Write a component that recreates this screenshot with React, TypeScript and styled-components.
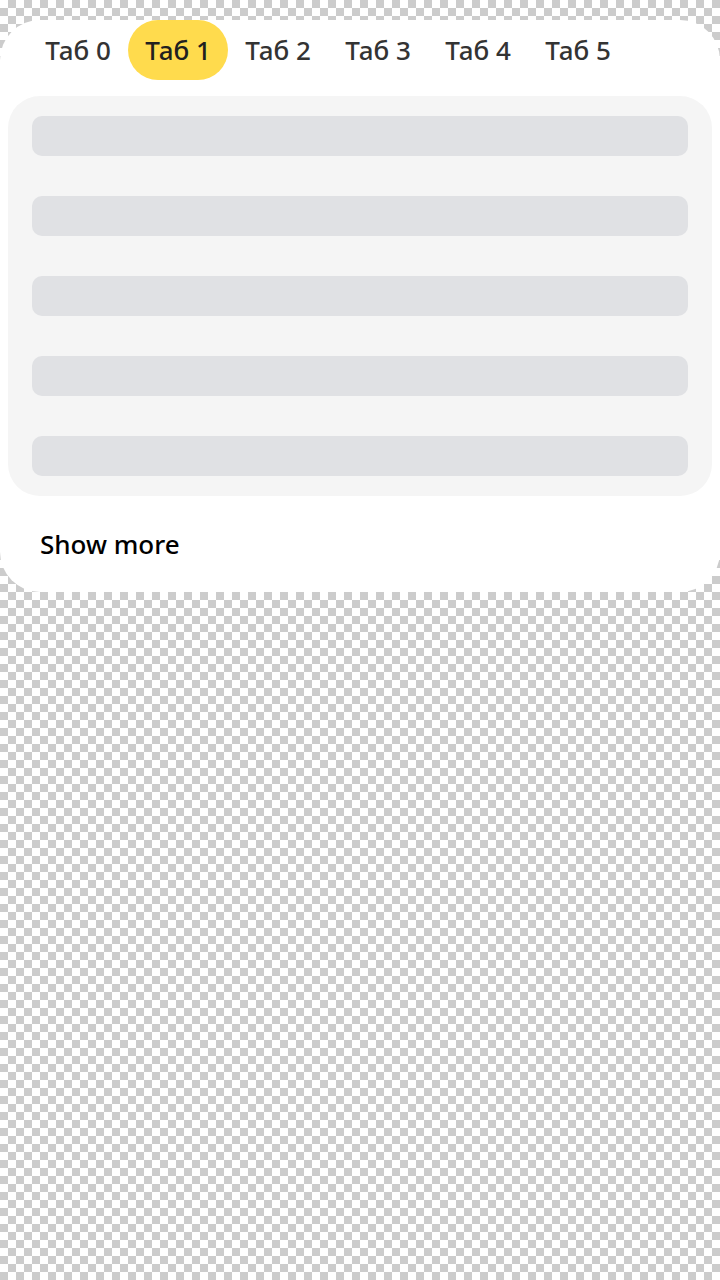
import React from "react";
import styled, { createGlobalStyle } from "styled-components";

const Global = createGlobalStyle`
  html, body {
    margin: 0;
    padding: 0;
    min-height: 1280px;
    background-color: #ffffff;
    background-image: conic-gradient(#cccccc 25%, #ffffff 0 50%, #cccccc 0 75%, #ffffff 0);
    background-size: 16px 16px;
    font-family: "Noto Sans", "Open Sans", sans-serif;
  }
`;

const Page = styled.div`
  padding-top: 20px;
`;

const Card = styled.div`
  background: #ffffff;
  border-radius: 40px;
  display: flex;
  flex-direction: column;
`;

const Tabs = styled.div`
  display: flex;
  height: 60px;
  padding-left: 28px;
`;

const Tab = styled.div<{ $active?: boolean }>`
  width: 100px;
  height: 60px;
  border-radius: 30px;
  display: flex;
  align-items: center;
  justify-content: center;
  font-size: 26px;
  font-weight: 500;
  color: ${(p) => (p.$active ? "#21201f" : "#333333")};
  background: ${(p) => (p.$active ? "#ffdb4d" : "transparent")};
`;

const Panel = styled.div`
  margin: 16px 8px 0;
  background: #f5f5f5;
  border-radius: 32px;
  padding: 20px 24px;
  display: flex;
  flex-direction: column;
  gap: 40px;
`;

const Row = styled.div`
  height: 40px;
  border-radius: 10px;
  background: #e0e1e4;
`;

const Footer = styled.div`
  height: 96px;
  display: flex;
  align-items: center;
  padding-left: 40px;
  font-size: 26px;
  font-weight: 500;
  color: #000000;
`;

export default function App() {
  const tabs = [0, 1, 2, 3, 4, 5];
  return (
    <>
      <Global />
      <Page>
        <Card>
          <Tabs>
            {tabs.map((t) => (
              <Tab key={t} $active={t === 1}>
                Таб {t}
              </Tab>
            ))}
          </Tabs>
          <Panel>
            {[0, 1, 2, 3, 4].map((i) => (
              <Row key={i} />
            ))}
          </Panel>
          <Footer>Show more</Footer>
        </Card>
      </Page>
    </>
  );
}
